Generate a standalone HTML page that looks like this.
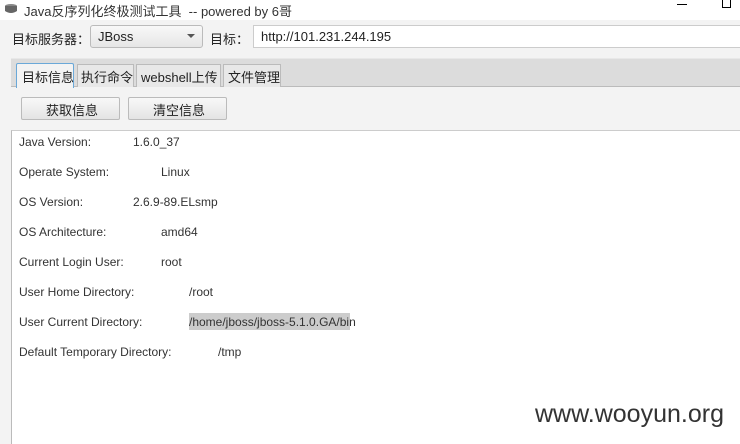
<!DOCTYPE html>
<html><head><meta charset="utf-8"><style>
*{margin:0;padding:0;box-sizing:border-box}
body{width:740px;height:444px;overflow:hidden;background:#f3f3f3;position:relative;font-family:"Liberation Sans","Noto Sans CJK SC",sans-serif;font-size:12px;color:#222}
.a{position:absolute;white-space:nowrap}
.t{font-size:12px;color:#333;transform-origin:0 50%}
</style></head><body>
<div class="a" style="left:0;top:0;width:740px;height:20px;background:#fff"></div>
<svg class="a" style="left:4px;top:2px" width="14" height="13"><ellipse cx="7" cy="4" rx="6" ry="2" fill="#888"/><path d="M1 4v5q6 4 12 0V4" fill="#666"/></svg>
<div class="a" style="left:24px;top:1px;font-size:13px;color:#333">Java反序列化终极测试工具&nbsp; -- powered by 6哥</div>
<div class="a" style="left:677px;top:4px;width:10px;height:1px;background:#000"></div>
<div class="a" style="left:722px;top:-2px;width:9px;height:10px;border:1px solid #000"></div>

<div class="a" style="left:12px;top:29px;font-size:13px">目标服务器：</div>
<div class="a" style="left:90px;top:25px;width:113px;height:23px;border:1px solid #bbb;border-radius:3px;background:linear-gradient(#f8f8f8,#e6e6e6)"></div>
<div class="a" style="left:98px;top:29px;font-size:13px">JBoss</div>
<div class="a" style="left:187px;top:34px;width:0;height:0;border-left:4px solid transparent;border-right:4px solid transparent;border-top:4px solid #555"></div>
<div class="a" style="left:210px;top:29px;font-size:13px">目标：</div>
<div class="a" style="left:253px;top:25px;width:490px;height:23px;background:#fff;border:1px solid #ccc"></div>
<div class="a" style="left:261px;top:29px;font-size:13px">http://101.231.244.195</div>

<div class="a" style="left:11px;top:58px;width:729px;height:29px;background:#dcdcdc;border-bottom:1px solid #bbb;border-top:1px solid #e8e8e8"></div>
<div class="a" style="left:16px;top:63px;width:58px;height:25px;background:#f3f3f3;border:1px solid #6aa8d8;border-bottom:none;border-radius:2px 2px 0 0"></div>
<div class="a" style="left:22px;top:67px;font-size:13px">目标信息</div>
<div class="a" style="left:77px;top:64px;width:57px;height:23px;background:#e8e8e8;border:1px solid #bbb;border-bottom:none"></div>
<div class="a" style="left:81px;top:67px;font-size:13px">执行命令</div>
<div class="a" style="left:136px;top:64px;width:85px;height:23px;background:#e8e8e8;border:1px solid #bbb;border-bottom:none"></div>
<div class="a" style="left:141px;top:67px;font-size:13px">webshell上传</div>
<div class="a" style="left:223px;top:64px;width:58px;height:23px;background:#e8e8e8;border:1px solid #bbb;border-bottom:none"></div>
<div class="a" style="left:228px;top:67px;font-size:13px">文件管理</div>

<div class="a" style="left:21px;top:97px;width:99px;height:23px;border:1px solid #bbb;border-radius:2px;background:linear-gradient(#f8f8f8,#e4e4e4)"></div>
<div class="a" style="left:46px;top:100px;font-size:13px">获取信息</div>
<div class="a" style="left:128px;top:97px;width:99px;height:23px;border:1px solid #bbb;border-radius:2px;background:linear-gradient(#f8f8f8,#e4e4e4)"></div>
<div class="a" style="left:153px;top:100px;font-size:13px">清空信息</div>

<div class="a" style="left:11px;top:130px;width:729px;height:314px;background:#fff;border-left:1px solid #bbb;border-top:1px solid #ccc"></div>

<div class="a t" style="left:19px;top:135px">Java Version:</div><div class="a t" style="left:133px;top:135px">1.6.0_37</div>
<div class="a t" style="left:19px;top:165px">Operate System:</div><div class="a t" style="left:161px;top:165px">Linux</div>
<div class="a t" style="left:19px;top:195px">OS Version:</div><div class="a t" style="left:133px;top:195px">2.6.9-89.ELsmp</div>
<div class="a t" style="left:19px;top:225px">OS Architecture:</div><div class="a t" style="left:161px;top:225px">amd64</div>
<div class="a t" style="left:19px;top:255px">Current Login User:</div><div class="a t" style="left:161px;top:255px">root</div>
<div class="a t" style="left:19px;top:285px">User Home Directory:</div><div class="a t" style="left:189px;top:285px">/root</div>
<div class="a t" style="left:19px;top:315px">User Current Directory:</div>
<div class="a" style="left:189px;top:313px;width:161px;height:17px;background:#ccc"></div>
<div class="a t" style="left:189px;top:315px">/home/jboss/jboss-5.1.0.GA/bin</div>
<div class="a t" style="left:19px;top:345px">Default Temporary Directory:</div><div class="a t" style="left:218px;top:345px">/tmp</div>

<div class="a" style="left:535px;top:400px;font-size:25px;color:#333">www.wooyun.org</div>
</body></html>
